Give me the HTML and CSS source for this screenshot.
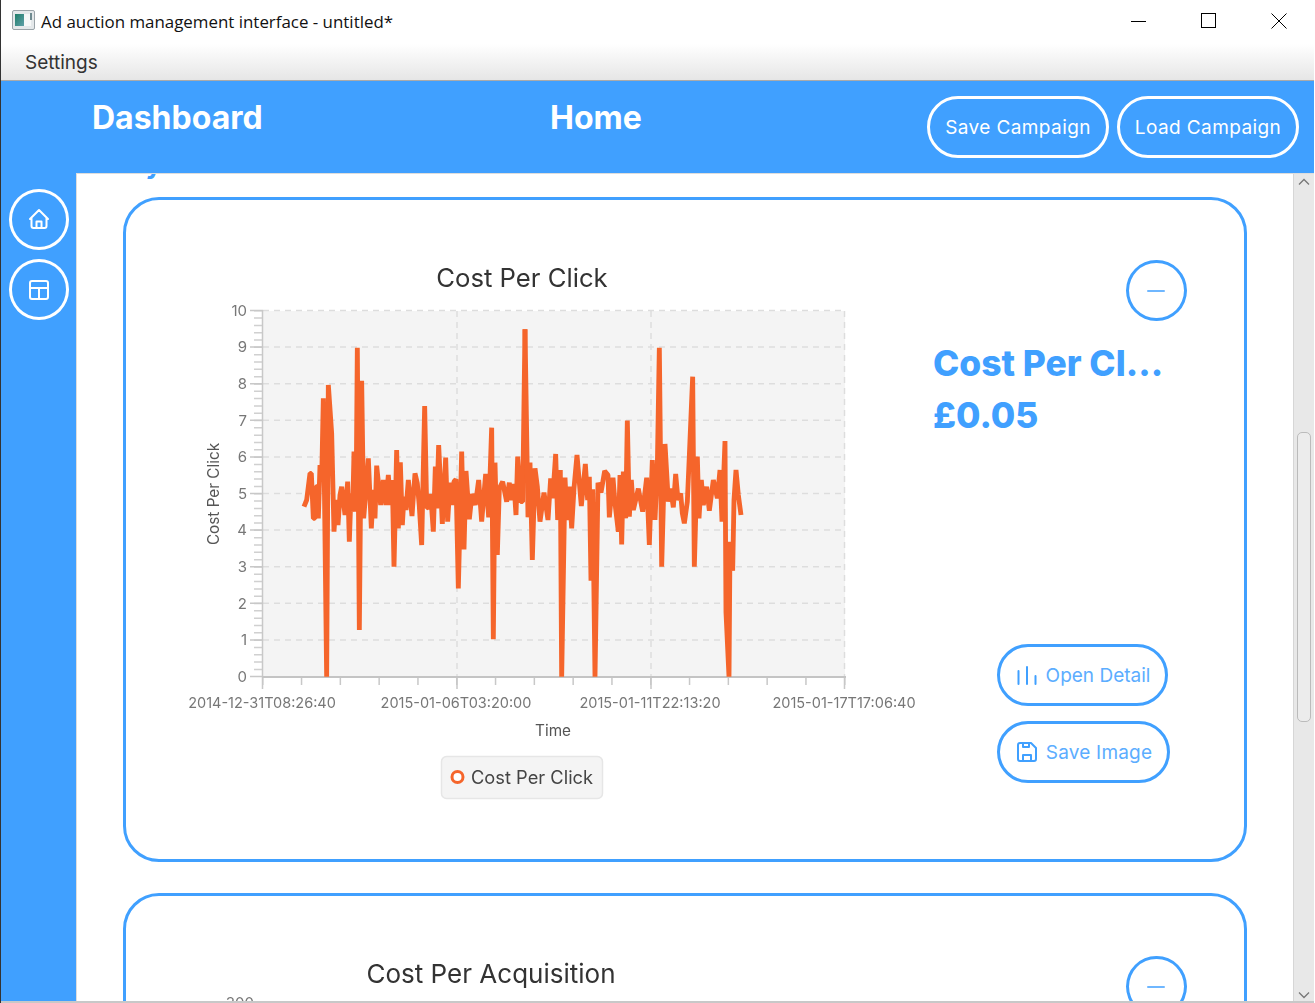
FILE: index.html
```html
<!DOCTYPE html>
<html lang="en">
<head>
<meta charset="utf-8">
<title>Ad auction management interface - untitled*</title>
<link rel="stylesheet" href="styles.css">
</head>
<body>
<div class="window">
  <header class="titlebar">
    <svg class="app-icon" viewBox="0 0 23 20" width="23" height="20">
      <defs><linearGradient id="ag" x1="0" x2="1" y1="0" y2="1"><stop offset="0" stop-color="#1f7d6a"/><stop offset="1" stop-color="#5fa0a8"/></linearGradient></defs>
      <rect x=".5" y=".5" width="22" height="19" rx="1.5" fill="#e4e8ea" stroke="#9aa3a8"/>
      <rect x="3" y="4" width="9" height="12" fill="url(#ag)"/>
      <rect x="12" y="4" width="7" height="12" fill="#f6f8f8"/>
      <rect x="18" y="3" width="2" height="7" fill="#6f8a90"/>
    </svg>
    <span class="window-title">Ad auction management interface - untitled*</span>
    <div class="controls">
      <span class="control"><svg viewBox="0 0 16 16" width="16" height="16"><path d="M0 8.5h15" stroke="#000" fill="none"/></svg></span>
      <span class="control"><svg viewBox="0 0 16 16" width="16" height="16"><rect x=".5" y=".5" width="14" height="14" stroke="#000" fill="none"/></svg></span>
      <span class="control"><svg viewBox="0 0 16 16" width="16" height="16"><path d="M.5.5l15 15M15.500.5l-15 15" stroke="#000" fill="none"/></svg></span>
    </div>
  </header>
  <nav class="menubar"><span class="menu-item">Settings</span></nav>
  <section class="appbar">
    <h1 class="app-title">Dashboard</h1>
    <h1 class="app-title">Home</h1>
    <div class="app-actions">
      <button class="pill pill-light">Save Campaign</button>
      <button class="pill pill-light">Load Campaign</button>
    </div>
  </section>
  <div class="workspace">
    <aside class="sidebar">
      <button class="round round-light">
        <svg viewBox="0 0 24 24" width="24" height="24"><path d="M3 12 12 3l9 9M4.500 11v8a2 2 0 0 0 2 2h11a2 2 0 0 0 2-2v-8M9.500 21v-6.500h5V21"/></svg>
      </button>
      <button class="round round-light">
        <svg viewBox="0 0 24 24" width="24" height="24"><rect x="3" y="3" width="18" height="18" rx="2"/><path d="M3 10h18M12 10v11"/></svg>
      </button>
    </aside>
    <main class="scroller">
      <div class="content">
        <h2 class="section-title">Key Metrics</h2>
        <article class="card">
          <svg class="chart" viewBox="126 200 800 655" width="800" height="655">
            <text class="chart-title" x="522" y="287">Cost Per Click</text>
            <rect class="plot" x="263" y="311" width="582" height="366"/>
            <path class="grid" d="M263 310.500H845M263 347.100H845M263 383.700H845M263 420.300H845M263 456.900H845M263 493.500H845M263 530.100H845M263 566.700H845M263 603.300H845M263 639.900H845M457 311V676M651 311V676M844.500 311V676"/>
            <line class="minor" x1="258" x2="258" y1="310" y2="677"/>
            <line class="minor-x" x1="262" x2="846" y1="681" y2="681"/>
            <path class="axis" d="M250 310.500H263M250 347.100H263M250 383.700H263M250 420.300H263M250 456.900H263M250 493.500H263M250 530.100H263M250 566.700H263M250 603.300H263M250 639.900H263M250 676.500H263M262.500 310V689M457 677V689M651 677V689M844.500 677V689"/>
            <path class="axis-x" d="M262 677H846"/>
            <g class="ytick">
              <text x="247" y="316">10</text><text x="247" y="352">9</text><text x="247" y="389">8</text><text x="247" y="426">7</text><text x="247" y="462">6</text><text x="247" y="499">5</text><text x="247" y="535">4</text><text x="247" y="572">3</text><text x="247" y="609">2</text><text x="247" y="645">1</text><text x="247" y="682">0</text>
            </g>
            <g class="xtick">
              <text x="262" y="708">2014-12-31T08:26:40</text><text x="456" y="708">2015-01-06T03:20:00</text><text x="650" y="708">2015-01-11T22:13:20</text><text x="844" y="708">2015-01-17T17:06:40</text>
            </g>
            <text class="axis-label" x="553" y="736">Time</text>
            <text class="axis-label" transform="translate(219 494) rotate(-90)">Cost Per Click</text>
            <g class="series-wrap" transform="translate(200 300) scale(.33333)">
              <polyline class="series" points="312,620 320,600 330,520 334,520 340,655 345,655 348,560 352,560 355,655 360,495 365,540 370,295 380,1130 385,255 395,400 402,695 408,600 414,675 420,585 425,560 435,645 443,545 448,725 453,580 458,635 462,455 468,635 472,143 478,990 485,242 491,655 497,582 505,475 514,685 520,570 525,655 530,497 542,615 550,540 558,615 565,525 572,615 577,540 582,800 590,450 595,685 601,487 607,675 612,590 618,630 625,540 636,648 645,520 652,550 658,620 665,735 674,318 680,620 686,625 692,582 700,695 706,500 710,625 716,435 727,672 737,473 743,665 750,548 756,615 762,545 768,538 775,865 785,455 792,748 798,513 808,658 816,582 826,615 836,540 845,665 857,522 866,652 875,383 880,1018 885,488 892,765 898,565 908,545 920,605 928,548 934,600 942,552 948,645 953,470 962,605 968,605 975,88"/>
            </g>
            <g class="series-wrap" transform="translate(520 300) scale(.33333)">
              <polyline class="series" points="15,88 24,652 30,488 37,780 45,505 52,560 60,665 72,578 84,660 92,535 98,595 107,462 113,660 121,510 125,1130 135,533 141,660 148,560 155,685 162,565 171,465 184,618 196,492 203,600 208,530 213,842 218,568 225,1130 234,548 243,578 254,513 264,525 268,652 279,533 285,610 295,695 300,525 305,733 310,515 317,655 322,362 328,650 334,540 340,630 355,566 368,635 380,533 388,735 397,480 405,660 412,500 418,143 425,800 435,432 445,605 452,566 460,622 467,522 474,600 482,580 487,640 493,670 502,605 508,468 518,230 523,800 532,470 537,655 544,540 550,615 560,560 568,632 580,540 592,595 600,510 606,665 615,423 618,937 627,1130 630,725 638,812 642,600 648,510 655,585 663,645"/>
            </g>
            <rect class="legend-box" x="441.500" y="756.500" width="161" height="42" rx="5"/>
            <circle class="legend-dot" cx="457.500" cy="777" r="5.500"/>
            <text class="legend-text" x="471" y="784">Cost Per Click</text>
          </svg>
          <div class="side">
            <button class="round round-blue"><svg viewBox="0 0 24 24" width="24" height="24"><path d="M4 12h16"/></svg></button>
            <div class="stat-name">Cost Per Cl...</div>
            <div class="stat-value">£0.05</div>
            <div class="side-actions">
              <button class="pill pill-blue pill-open">
                <svg viewBox="0 0 24 24" width="24" height="24"><path d="M3.500 8V21M12 4V21M20.500 13V21"/></svg>Open Detail
              </button>
              <button class="pill pill-blue pill-save">
                <svg viewBox="0 0 24 24" width="24" height="24"><path d="M5 3h11l5 5v11a2 2 0 0 1-2 2H5a2 2 0 0 1-2-2V5a2 2 0 0 1 2-2z"/><path d="M8 21v-6h8v6M8 3v4h6V3"/></svg>Save Image
              </button>
            </div>
          </div>
        </article>
        <article class="card card-next">
          <svg class="chart" viewBox="126 896 800 120" width="800" height="120">
            <text class="chart-title chart-title-wide" x="491" y="983">Cost Per Acquisition</text>
            <g class="ytick"><text x="254" y="1008">300</text></g>
          </svg>
          <div class="side">
            <button class="round round-blue"><svg viewBox="0 0 24 24" width="24" height="24"><path d="M4 12h16"/></svg></button>
          </div>
        </article>
      </div>
      <div class="scrollbar">
        <svg class="arrow" viewBox="0 0 12 8" width="12" height="8"><path d="M1 6.500 6 1.500l5 5"/></svg>
        <div class="track"><div class="thumb"></div></div>
        <svg class="arrow" viewBox="0 0 12 8" width="12" height="8"><path d="M1 1.500l5 5 5-5"/></svg>
      </div>
    </main>
  </div>
</div>
</body>
</html>
```
FILE: styles.css
```css
* { box-sizing: border-box; }
html, body { margin: 0; padding: 0; background: #fff; }
body { font-family: Inter, "Liberation Sans", sans-serif; overflow: hidden; }

.window {
  width: 1315px; height: 1003px; display: flex; flex-direction: column;
  overflow: hidden; background: #fff; border-left: 1px solid #333; border-right: 1px solid #fff;
}

.titlebar { height: 44px; flex: none; display: flex; align-items: center; padding-left: 11px; background: #fff; }
.app-icon { flex: none; margin-right: 6px; margin-top: -4px; }
.window-title { font-family: "Open Sans", sans-serif; font-size: 16.900px; color: #111; margin-top: -1px; }
.controls { margin-left: auto; display: flex; }
.control { width: 70px; height: 44px; display: flex; align-items: center; justify-content: center; padding-bottom: 3px; }

.menubar {
  height: 37px; flex: none; display: flex; align-items: center; padding-left: 24px;
  background: linear-gradient(#fff, #e6e6e6); border-bottom: 1px solid #aaa;
}
.menu-item { font-size: 19px; color: #333; }

.appbar {
  height: 92px; flex: none; display: grid; grid-template-columns: 458px 1fr auto;
  padding: 0 15px 0 91px; background: #40a0ff;
}
.app-title { margin: 17px 0 0; font-size: 32px; line-height: 40px; font-weight: 700; color: #fff; }
.app-actions { display: flex; gap: 8px; padding-top: 15px; }

.pill {
  font: inherit; font-size: 19px; border-radius: 31px; background: transparent; border: 3px solid;
  height: 62px; display: flex; align-items: center; justify-content: center; padding: 0;
}
.pill-light { width: 182px; color: #fff; border-color: #fff; letter-spacing: .4px; }
.pill-blue { color: #5cadff; border-color: #40a0ff; gap: 7px; }
.pill-blue svg { fill: none; stroke: #40a0ff; stroke-width: 2; stroke-linecap: round; stroke-linejoin: round; }
.pill-open { width: 171px; }
.pill-save { width: 173px; letter-spacing: .2px; }

.workspace { flex: 1; min-height: 0; display: flex; border-bottom: 2px solid #c8c8c8; }
.sidebar { width: 75px; flex: none; background: #40a0ff; display: flex; flex-direction: column; gap: 9.500px; padding: 15.500px 0 0 7.500px; }

.round {
  width: 60.500px; height: 61px; border-radius: 50%; border: 3px solid; background: transparent;
  padding: 0; display: flex; align-items: center; justify-content: center; flex: none;
}
.round svg { fill: none; stroke-width: 2; stroke-linecap: round; stroke-linejoin: round; }
.round-light { border-color: #fff; }
.round-light svg { stroke: #fff; }
.round-blue { border-color: #40a0ff; }
.round-blue svg { stroke: #6fb7ff; }

.scroller { flex: 1; min-width: 0; display: flex; border-left: 1px solid #ddd; border-top: 1px solid #ddd; overflow: hidden; background: #fff; }
.content { flex: 1; min-width: 0; padding: 23px 46px 0 46px; overflow: hidden; }
.section-title { margin: -50px 0 15px -10px; height: 35px; font-size: 26px; line-height: 35px; font-weight: 700; color: #40a0ff; }

.card { width: 1124px; height: 665px; border: 3px solid #40a0ff; border-radius: 36px; display: flex; background: #fff; }
.card-next { margin-top: 31px; }
.chart { flex: none; display: block; filter: blur(.4px); }
.chart-title { font-size: 25.700px; fill: #333; text-anchor: middle; }
.chart-title-wide { font-size: 26px; }
.plot { fill: #f4f4f4; }
.grid { stroke: #ddd; stroke-width: 1.500; stroke-dasharray: 6 5; fill: none; }
.axis { stroke: #c8c8c8; stroke-width: 1.500; fill: none; }
.axis-x { stroke: #c4c4c4; stroke-width: 2; fill: none; }
.minor { stroke: #d0d0d0; stroke-width: 8; stroke-dasharray: 1.500 5.820; }
.minor-x { stroke: #c8c8c8; stroke-width: 8; stroke-dasharray: 1.500 37.300; }
.ytick text { font-size: 15px; fill: #777; text-anchor: end; }
.xtick text { font-size: 14.500px; fill: #777; text-anchor: middle; }
.axis-label { font-size: 15.300px; fill: #555; text-anchor: middle; }
.series { fill: none; stroke: #f5652b; stroke-width: 14.500; stroke-linejoin: bevel; }
.legend-box { fill: #f4f4f4; stroke: #e6e6e6; stroke-width: 1.500; }
.legend-dot { fill: #fff; stroke: #f5652b; stroke-width: 3; }
.legend-text { font-size: 18.300px; fill: #444; }

.side { flex: 1; min-width: 0; display: flex; flex-direction: column; padding: 60px 0 76px 7px; }
.side .round-blue { margin-left: 193px; }
.stat-name { margin-top: 19px; font-size: 35.400px; line-height: 48px; font-weight: 800; color: #40a0ff; white-space: nowrap; }
.stat-value { margin-top: 4px; font-size: 35.400px; line-height: 48px; font-weight: 800; color: #40a0ff; }
.side-actions { margin-top: auto; margin-left: 64px; display: flex; flex-direction: column; gap: 15px; }

.scrollbar { width: 21px; flex: none; display: flex; flex-direction: column; align-items: center; background: #e8e8e8; border-left: 1px solid #d6d6d6; padding: 4px 0 2px; }
.arrow { flex: none; fill: none; stroke: #777; stroke-width: 1.300; }
.track { flex: 1; width: 100%; padding: 246px 3px 0 3px; }
.thumb { height: 290px; background: #ececec; border: 1px solid #bbb; border-radius: 5px; }
```
